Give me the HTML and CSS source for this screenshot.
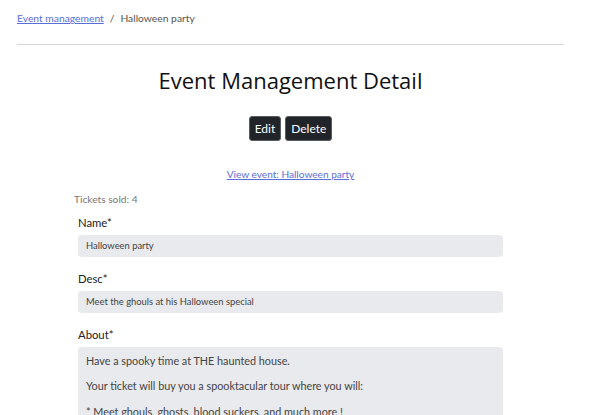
FILE: index.html
```html
<!DOCTYPE html>
<html>
<head>
<meta charset="utf-8">
<link rel="stylesheet" href="styles.css">
</head>
<body>
<div class="page">
  <nav class="crumbs"><a href="#">Event management</a><span class="sep">/</span><span class="current">Halloween party</span></nav>
  <hr class="rule">
  <h1 class="title">Event Management Detail</h1>
  <div class="actions"><button class="btn">Edit</button><button class="btn">Delete</button></div>
  <div class="view"><a href="#">View event: Halloween party</a></div>
  <div class="form">
    <div class="tickets">Tickets sold: 4</div>
    <div class="group">
      <label class="label">Name*</label>
      <div class="field">Halloween party</div>
    </div>
    <div class="group">
      <label class="label">Desc*</label>
      <div class="field">Meet the ghouls at his Halloween special</div>
    </div>
    <div class="group">
      <label class="label">About*</label>
      <div class="field area">Have a spooky time at THE haunted house.

Your ticket will buy you a spooktacular tour where you will:

* Meet ghouls, ghosts, blood suckers, and much more !
* Eat candy</div>
    </div>
  </div>
</div>
</body>
</html>
```

FILE: styles.css
```css
html, body { margin: 0; padding: 0; background: #fff; }
body { font-family: Lato, "Open Sans", sans-serif; color: #212529; overflow: hidden; height: 415px; }
.page { width: 547px; padding: 0 0 0 17px; }
.crumbs { font-size: 10.3px; line-height: 16px; padding-top: 10px; color: #555; display: flex; gap: 6px; }
.crumbs a { color: #5a6ed8; }
.rule { border: 0; border-top: 1px solid #d5d5d5; margin: 18px 0 0 0; }
.title { font-family: "Open Sans", sans-serif; font-size: 22px; font-weight: 400; text-align: center; margin: 20px 0 0 0; line-height: 30px; color: #111; }
.actions { display: flex; justify-content: center; gap: 4px; margin-top: 21px; }
.btn { font-family: inherit; font-size: 12px; background: #212529; color: #fff; border: 1px solid #5a5d60; border-radius: 3px; height: 25px; padding: 0 5px; }
.view { text-align: center; font-size: 10.1px; margin-top: 26px; line-height: 14px; }
.view a { color: #5a6ed8; }
.form { width: 433px; margin: 11px auto 0; }
.tickets { font-size: 10.2px; color: #777; line-height: 14px; }
.group { padding: 0 4px; margin-top: 9px; }
.group + .group { margin-top: 14px; }
.label { display: block; font-size: 11.3px; color: #222; line-height: 16px; margin-bottom: 4px; }
.field { background: #e9eaed; border-radius: 4px; font-size: 9.4px; color: #444; height: 22px; line-height: 22px; padding: 0 8px; }
.area { height: auto; white-space: pre-line; font-size: 10.8px; line-height: 12.7px; padding: 8px 8px; min-height: 90px; }
```
